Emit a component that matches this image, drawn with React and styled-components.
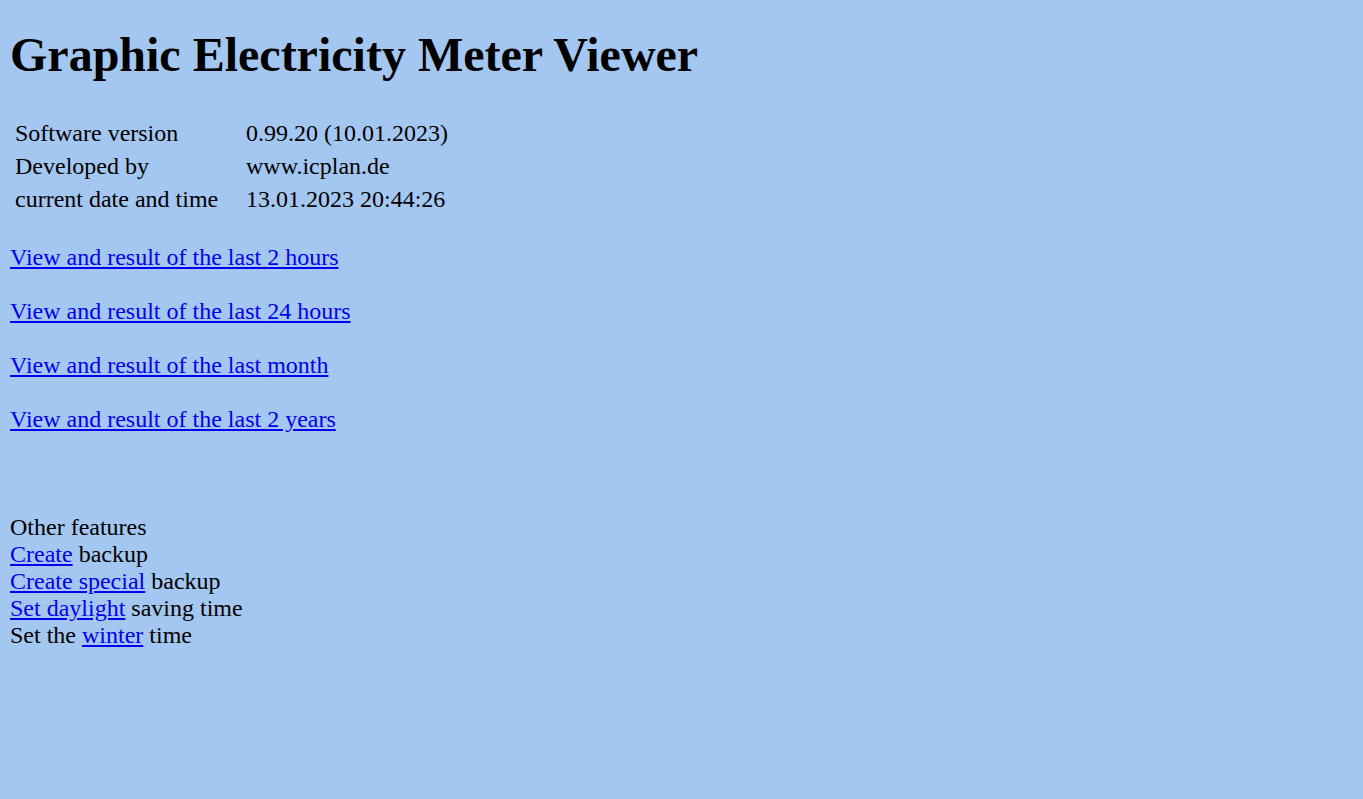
import React from "react"
import styled, { createGlobalStyle } from "styled-components"

const GlobalStyle = createGlobalStyle`
  html, body {
    background: #a3c7f0;
  }
  body {
    margin: 10px;
    font-family: "Liberation Serif", "Times New Roman", serif;
    font-size: 24px;
    color: #000;
  }
`

const Title = styled.h1`
  font-size: 48px;
  font-weight: bold;
  margin: 17px 0 34px;
`

const InfoTable = styled.table`
  border-spacing: 2px;
  font-size: 24px;

  td {
    padding: 2px 3px;
    vertical-align: top;
  }

  td:first-child {
    width: 223px;
  }
`

const Block = styled.div`
  margin-top: 27px;
  line-height: 27px;
`

const A = styled.a`
  color: #0000ee;
  text-decoration: underline;
`

const info = [
  ["Software version", "0.99.20 (10.01.2023)"],
  ["Developed by", "www.icplan.de"],
  ["current date and time", "13.01.2023 20:44:26"],
]

const views = ["2 hours", "24 hours", "month", "2 years"]

export default function App() {
  return (
    <>
      <GlobalStyle />
      <Title>Graphic Electricity Meter Viewer</Title>
      <InfoTable>
        <tbody>
          {info.map(([k, v]) => (
            <tr key={k}>
              <td>{k}</td>
              <td>{v}</td>
            </tr>
          ))}
        </tbody>
      </InfoTable>
      <Block>
        {views.map(v => (
          <React.Fragment key={v}>
            <A href="#">View and result of the last {v}</A>
            <br />
            <br />
          </React.Fragment>
        ))}
        <br />
        <br />
        Other features<br />
        <A href="#">Create</A> backup<br />
        <A href="#">Create special</A> backup<br />
        <A href="#">Set daylight</A> saving time<br />
        Set the <A href="#">winter</A> time
      </Block>
    </>
  )
}
